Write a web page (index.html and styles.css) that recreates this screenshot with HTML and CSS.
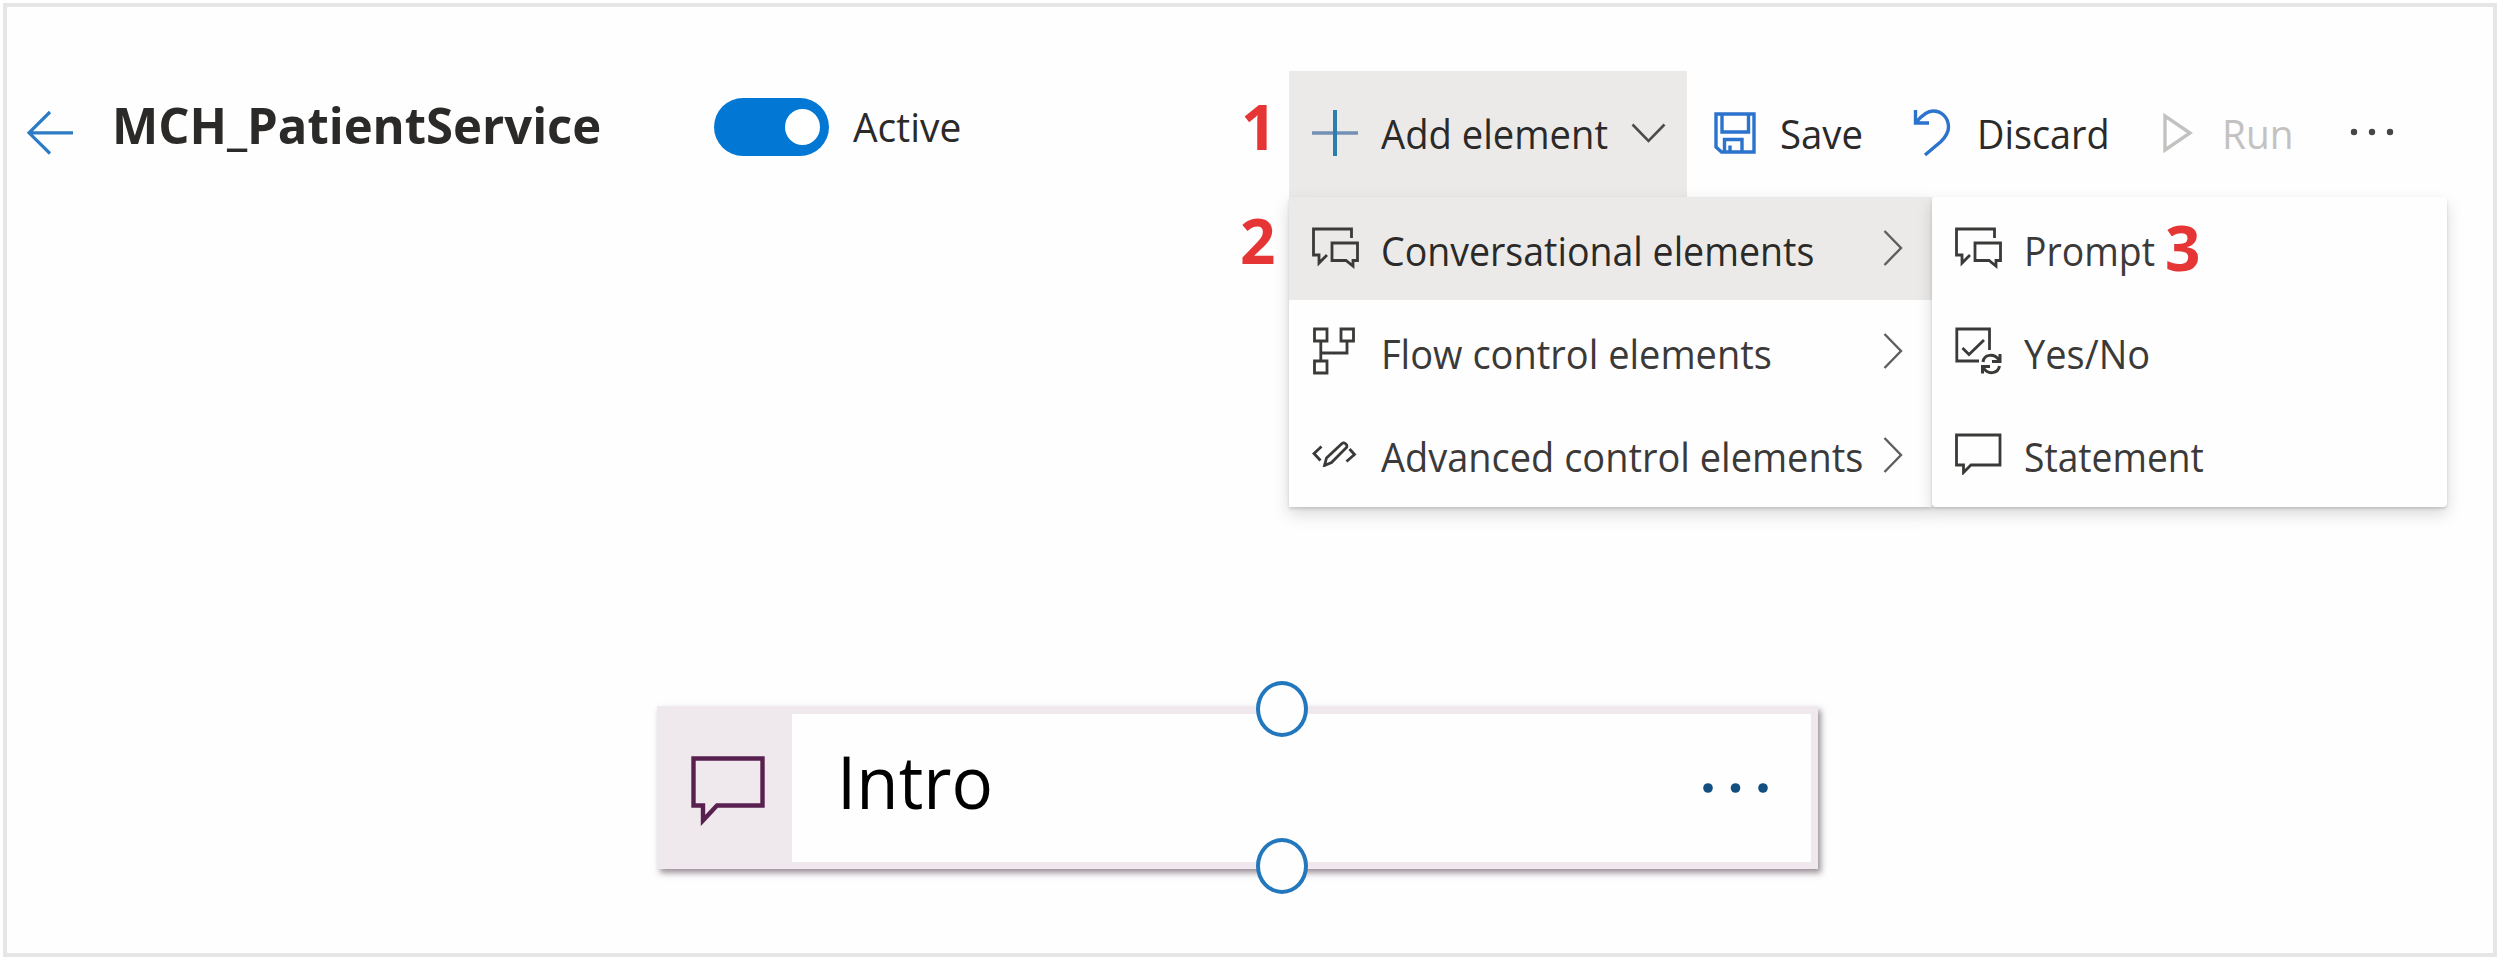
FILE: index.html
```html
<!DOCTYPE html>
<html lang="en">
<head>
<meta charset="utf-8">
<title>MCH_PatientService</title>
<link rel="stylesheet" href="styles.css">
</head>
<body>
<main class="frame">
  <header class="topbar">
    <svg class="back" width="49" height="46" viewBox="0 0 49 46"><path d="M23 2 2 22.800 23 43.500M2 22.800H46" /></svg>
    <h1 class="title"><span class="squeeze">MCH_PatientService</span></h1>
    <span class="toggle"><span class="knob"></span></span>
    <span class="state"><span class="squeeze">Active</span></span>

    <nav class="toolbar">
      <div class="add">
        <svg class="ic" width="48" height="48" viewBox="0 0 48 48"><path class="plus-h" d="M1 24H47"/><path class="plus-v" d="M24 1V47"/></svg>
        <span class="label add-label"><span class="squeeze">Add element</span></span>
        <svg class="chev-down" width="35" height="20" viewBox="0 0 35 20"><path d="M1.500 1.500 17.500 17.800 33.500 1.500"/></svg>
      </div>
      <div class="cmd save">
        <svg class="ic blue" width="42" height="42" viewBox="0 0 42 42"><path d="M2 2H40V40H7.500L2 35ZM8 2V20H34.500V2M10.500 40V27.500H28V40M16 40V33.500"/></svg>
        <span class="label"><span class="squeeze">Save</span></span>
      </div>
      <div class="cmd discard">
        <svg class="ic blue" width="38" height="48" viewBox="0 0 38 48"><path d="M2.500 1V14H16M3 13.500C9 6 14 2 20 2C29 2 35.500 9 35.500 18C35.500 24 32 28.500 28 32.500L12 46"/></svg>
        <span class="label"><span class="squeeze">Discard</span></span>
      </div>
      <div class="cmd run">
        <svg class="ic" width="30" height="40" viewBox="0 0 30 40"><path d="M2 3V37L27 20Z"/></svg>
        <span class="label"><span class="squeeze">Run</span></span>
      </div>
      <svg class="more" width="44" height="8" viewBox="0 0 44 8"><circle cx="4" cy="4" r="3.200"/><circle cx="22" cy="4" r="3.200"/><circle cx="40" cy="4" r="3.200"/></svg>
    </nav>
  </header>

  <ul class="menu menu-main">
    <li class="item selected">
      <svg class="icon" width="48" height="42" viewBox="0 0 48 42"><path d="M39.500 11V2H1.500V28H7V36L15 28M20 16H45.500V33.500H41V39L34 33.500H20Z"/></svg>
      <span class="text conv"><span class="squeeze">Conversational elements</span></span>
      <svg class="chev" width="20" height="36" viewBox="0 0 20 36"><path d="M1.500 1 18 18 1.500 35"/></svg>
    </li>
    <li class="item">
      <svg class="icon" width="48" height="48" viewBox="0 0 48 48"><path d="M2.500 2H15V14H2.500ZM29 2H41.500V14H29ZM2.500 34H15V46H2.500ZM8.800 14V34M8.800 26H35V14"/></svg>
      <span class="text flow"><span class="squeeze">Flow control elements</span></span>
      <svg class="chev" width="20" height="36" viewBox="0 0 20 36"><path d="M1.500 1 18 18 1.500 35"/></svg>
    </li>
    <li class="item">
      <svg class="icon" width="48" height="26" viewBox="0 0 48 26"><path d="M9.500 5.500 2 12.500 8.500 19.500M34.500 20.500 42.500 13.500 37.500 8M12.500 24.500 14.500 17 30 2.500C32 .8 36 3.500 34.500 6.500L19.500 21.500ZM12.500 24.500 19.500 21.500"/></svg>
      <span class="text adv"><span class="squeeze">Advanced control elements</span></span>
      <svg class="chev" width="20" height="36" viewBox="0 0 20 36"><path d="M1.500 1 18 18 1.500 35"/></svg>
    </li>
  </ul>

  <ul class="menu menu-sub">
    <li class="item">
      <svg class="icon" width="48" height="42" viewBox="0 0 48 42"><path d="M39.500 11V2H1.500V28H7V36L15 28M20 16H45.500V33.500H41V39L34 33.500H20Z"/></svg>
      <span class="text prompt"><span class="squeeze">Prompt</span></span>
    </li>
    <li class="item">
      <svg class="icon" width="48" height="48" viewBox="0 0 48 48"><path d="M24 34H1.800V2H34.500V23M7.500 21 14 27.500 29 13"/><path class="sync" d="M28 35C29 27 39 26 44 33M45 27V34.500H37M44.500 39C43 47 33 48 28.500 41M27.500 46.500V39.500H35"/></svg>
      <span class="text yesno"><span class="squeeze">Yes/No</span></span>
    </li>
    <li class="item">
      <svg class="icon" width="48" height="42" viewBox="0 0 48 42"><path d="M1.500 2H45V32H16L8.500 39.500V32H1.500Z"/></svg>
      <span class="text statement"><span class="squeeze">Statement</span></span>
    </li>
  </ul>

  <span class="mark mark-1">1</span>
  <span class="mark mark-2">2</span>
  <span class="mark mark-3">3</span>

  <section class="node">
    <div class="node-icon">
      <svg width="76" height="70" viewBox="0 0 76 70"><path d="M2.500 2.500H71.500V49.500H26L12 64.500V49.500H2.500Z"/></svg>
    </div>
    <div class="node-body">
      <span class="node-title"><span class="squeeze">Intro</span></span>
      <svg class="node-more" width="66" height="12" viewBox="0 0 66 12"><circle cx="6" cy="6" r="4.800"/><circle cx="33.500" cy="6" r="4.800"/><circle cx="61" cy="6" r="4.800"/></svg>
    </div>
    <span class="port port-top"></span>
    <span class="port port-bottom"></span>
  </section>
</main>
</body>
</html>
```

FILE: styles.css
```css
* { box-sizing: border-box; }

body {
  margin: 0;
  padding: 3px;
  height: 960px;
  overflow: hidden;
  background: #fff;
  color: #2b2a29;
  font-family: "Open Sans", "Noto Sans", sans-serif;
}

svg { display: block; flex: none; fill: none; }

.frame {
  height: 954px;
  border: 4px solid #e6e6e6;
  background: #fefefe;
}

/* Labels are slightly narrower than the family's natural width */
.squeeze {
  display: inline-block;
  white-space: nowrap;
  transform: scaleX(var(--k, 1));
  transform-origin: 0 50%;
}

/* Top bar */
.topbar {
  display: flex;
  align-items: flex-start;
  height: 126px;
  margin-top: 64px;
}

.back {
  margin: 39px 0 0 20px;
  stroke: #2d7bc4;
  stroke-width: 3.2;
}

.title {
  --k: .98;
  width: 602px;
  margin: 20px 0 0 36px;
  font-size: 50px;
  line-height: 68px;
  font-weight: 700;
}

.toggle {
  display: flex;
  align-items: center;
  justify-content: flex-end;
  width: 115px;
  height: 58px;
  margin-top: 27px;
  padding-right: 9px;
  border-radius: 29px;
  background: #0277d4;
}

.knob {
  width: 35px;
  height: 36px;
  border-radius: 50%;
  background: #fff;
}

.state {
  --k: .973;
  width: 435px;
  margin: 29px 0 0 24px;
  font-size: 40px;
  line-height: 54px;
}

.toolbar {
  display: flex;
  height: 126px;
  align-items: center;
  font-size: 40px;
  line-height: 54px;
}

.add {
  display: flex;
  align-items: center;
  width: 398px;
  height: 126px;
  margin-left: 1px;
  padding-left: 22px;
  background: #ebeae9;
}

.add .ic { margin: -2px 22px 0 0; }
.plus-h { stroke: #7390b4; stroke-width: 3.5; }
.plus-v { stroke: #2b7fae; stroke-width: 4; }
.add-label { --k: .954; width: 250px; }
.chev-down { margin-top: -3px; stroke: #4d4c4b; stroke-width: 2.6; }

.cmd { display: flex; align-items: center; }
.cmd .ic { margin-top: -2px; }
.blue { stroke: #2b73cc; stroke-width: 3.4; }
.save { --k: .958; width: 199px; padding-left: 27px; }
.save .ic { margin-right: 24px; }
.discard { --k: .944; width: 251px; padding-left: 27px; }
.discard .ic { margin-right: 26px; }
.run { --k: .97; width: 213px; padding-left: 26px; color: #c3c2c1; }
.run .ic { margin-right: 29px; stroke: #c3c2c1; stroke-width: 3.4; }
.more { margin-top: -4px; fill: #484644; }

/* Menus */
.menu {
  position: absolute;
  top: 197px;
  height: 310px;
  margin: 0;
  padding: 0;
  list-style: none;
  background: #fefefe;
  box-shadow: 0 7px 16px rgba(0, 0, 0, .15), 0 2px 3px rgba(0, 0, 0, .14);
}

.menu-main { left: 1289px; width: 643px; }
.menu-sub { left: 1932px; width: 515px; border-radius: 4px; }

.item {
  display: flex;
  align-items: center;
  height: 103.300px;
  padding: 0 29px 0 23px;
  font-size: 40px;
  line-height: 54px;
}

.selected { background: #ebeae9; }

.icon { margin-top: -2px; stroke: #3b3a39; stroke-width: 2.8; }
.sync { stroke-width: 3; }

.text { flex: 1; min-width: 0; margin: 4px 0 0 21px; color: #3b3a39; }
.selected .text { color: #2b2a29; }
.chev { margin-top: -1px; stroke: #605e5c; stroke-width: 2.4; }

.conv { --k: .938; }
.flow { --k: .95; }
.adv { --k: .949; }
.prompt { --k: .934; }
.yesno { --k: .95; }
.statement { --k: .93; }

/* Step markers laid over the page */
.mark {
  position: absolute;
  color: #e53535;
  font-size: 62px;
  line-height: 60px;
  font-weight: 700;
}

.mark-1 { left: 1241px; top: 96px; }
.mark-2 { left: 1240px; top: 210px; }
.mark-3 { left: 2165px; top: 217px; }

/* Dialog node on the canvas */
.node {
  position: absolute;
  left: 657px;
  top: 706px;
  display: flex;
  width: 1161px;
  height: 163px;
  padding: 7.500px 7px 7.500px 0;
  background: #efe9ee;
  box-shadow: 3px 4px 6px rgba(60, 40, 55, .5);
}

.node-icon {
  width: 135px;
  padding: 42.500px 0 0 34px;
}

.node-icon svg { stroke: #58204f; stroke-width: 4.4; }

.node-body {
  display: flex;
  flex: 1;
  align-items: center;
  justify-content: space-between;
  padding: 0 43px 0 45px;
  background: #fefefe;
}

.node-title {
  --k: .933;
  margin-top: -14px;
  color: #000;
  font-size: 74px;
  line-height: 100px;
}

.node-more { fill: #124e7f; }

.port {
  position: absolute;
  left: 598.500px;
  width: 52px;
  height: 56px;
  border: 4px solid #2277bd;
  border-radius: 50%;
  background: #fefefe;
}

.port-top { top: -25.500px; }
.port-bottom { top: 132px; }
```
